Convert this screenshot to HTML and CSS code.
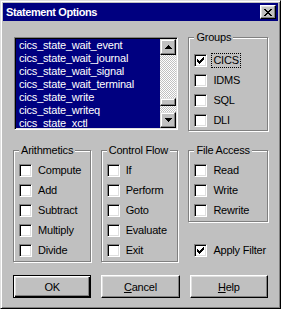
FILE: index.html
```html
<!DOCTYPE html>
<html>
<head>
    <meta charset="utf-8">
    <title>Statement Options</title>
    <link rel="stylesheet" href="styles.css">
</head>
<body>
    <div class="window">
        <div class="titlebar">
            <span class="title">Statement Options</span>
            <span class="close">
                <svg width="8" height="7" viewBox="0 0 8 7" shape-rendering="crispEdges"><path d="M0 0h2v1H0z M6 0h2v1H6z M1 1h2v1H1z M5 1h2v1H5z M2 2h4v1H2z M3 3h2v1H3z M2 4h4v1H2z M1 5h2v1H1z M5 5h2v1H5z M0 6h2v1H0z M6 6h2v1H6z"/></svg>
            </span>
        </div>
        <div class="content">
            <div class="grid">
                <div class="listbox">
                    <ul class="items">
                        <li>cics_state_wait_event</li>
                        <li>cics_state_wait_journal</li>
                        <li>cics_state_wait_signal</li>
                        <li>cics_state_wait_terminal</li>
                        <li>cics_state_write</li>
                        <li>cics_state_writeq</li>
                        <li>cics_state_xctl</li>
                    </ul>
                    <div class="scrollbar">
                        <div class="sbtn">
                            <svg width="7" height="4" viewBox="0 0 7 4" shape-rendering="crispEdges"><path d="M3 0h1v1H3z M2 1h3v1H2z M1 2h5v1H1z M0 3h7v1H0z"/></svg>
                        </div>
                        <div class="track"><div class="thumb"></div></div>
                        <div class="sbtn">
                            <svg width="7" height="4" viewBox="0 0 7 4" shape-rendering="crispEdges"><path d="M0 0h7v1H0z M1 1h5v1H1z M2 2h3v1H2z M3 3h1v1H3z"/></svg>
                        </div>
                    </div>
                </div>

                <fieldset class="group groups">
                    <legend>Groups</legend>
                    <label class="check"><span class="box"><svg width="7" height="7" viewBox="0 0 7 7" shape-rendering="crispEdges"><path d="M6 0h1v1H6z M5 1h2v1H5z M0 2h1v1H0z M4 2h3v1H4z M0 3h2v1H0z M3 3h3v1H3z M0 4h5v1H0z M1 5h3v1H1z M2 6h1v1H2z"/></svg></span><span class="text focus">CICS</span></label>
                    <label class="check"><span class="box"></span><span class="text">IDMS</span></label>
                    <label class="check"><span class="box"></span><span class="text">SQL</span></label>
                    <label class="check"><span class="box"></span><span class="text">DLI</span></label>
                </fieldset>

                <fieldset class="group">
                    <legend>Arithmetics</legend>
                    <label class="check"><span class="box"></span><span class="text">Compute</span></label>
                    <label class="check"><span class="box"></span><span class="text">Add</span></label>
                    <label class="check"><span class="box"></span><span class="text">Subtract</span></label>
                    <label class="check"><span class="box"></span><span class="text">Multiply</span></label>
                    <label class="check"><span class="box"></span><span class="text">Divide</span></label>
                </fieldset>

                <fieldset class="group">
                    <legend>Control Flow</legend>
                    <label class="check"><span class="box"></span><span class="text">If</span></label>
                    <label class="check"><span class="box"></span><span class="text">Perform</span></label>
                    <label class="check"><span class="box"></span><span class="text">Goto</span></label>
                    <label class="check"><span class="box"></span><span class="text">Evaluate</span></label>
                    <label class="check"><span class="box"></span><span class="text">Exit</span></label>
                </fieldset>

                <div class="column">
                    <fieldset class="group">
                        <legend>File Access</legend>
                        <label class="check"><span class="box"></span><span class="text">Read</span></label>
                        <label class="check"><span class="box"></span><span class="text">Write</span></label>
                        <label class="check"><span class="box"></span><span class="text">Rewrite</span></label>
                    </fieldset>
                    <label class="check apply"><span class="box"><svg width="7" height="7" viewBox="0 0 7 7" shape-rendering="crispEdges"><path d="M6 0h1v1H6z M5 1h2v1H5z M0 2h1v1H0z M4 2h3v1H4z M0 3h2v1H0z M3 3h3v1H3z M0 4h5v1H0z M1 5h3v1H1z M2 6h1v1H2z"/></svg></span><span class="text">Apply Filter</span></label>
                </div>
            </div>

            <div class="buttons">
                <div class="button default">OK</div>
                <div class="button"><u>C</u>ancel</div>
                <div class="button"><u>H</u>elp</div>
            </div>
        </div>
    </div>
</body>
</html>
```

FILE: styles.css
```css
*
{
    box-sizing: border-box;
}
body
{
    margin: 0px;
    font-family: "Liberation Sans", Arial, sans-serif;
    font-size: 11px;
    letter-spacing: -0.2px;
    background: #c0c0c0;
}
.window
{
    width: 281px;
    height: 309px;
    padding: 2px;
    display: flex;
    flex-direction: column;
    background: #c0c0c0;
    border: 1px solid;
    border-color: #dfdfdf #000 #000 #dfdfdf;
    box-shadow: inset 1px 1px #fff, inset -1px -1px #808080;
}

/* title bar */
.titlebar
{
    height: 18px;
    padding: 0 2px 0 3px;
    display: flex;
    align-items: center;
    background: #000080;
    color: #fff;
}
.title
{
    flex: 1;
    font-weight: bold;
    letter-spacing: -0.4px;
}
.close
{
    width: 16px;
    height: 14px;
    display: flex;
    align-items: center;
    justify-content: center;
    background: #c0c0c0;
    border: 1px solid;
    border-color: #fff #000 #000 #fff;
    box-shadow: inset -1px -1px #808080, inset 1px 1px #dfdfdf;
}

/* dialog body */
.content
{
    flex: 1;
    padding: 10px 10px 8px;
    display: flex;
    flex-direction: column;
}
.grid
{
    display: grid;
    grid-template-columns: repeat(3, 1fr);
    column-gap: 10px;
    row-gap: 13px;
}

/* list box */
.listbox
{
    grid-column: span 2;
    align-self: start;
    height: 93px;
    margin: 6px 0 0 1px;
    padding: 1px;
    display: flex;
    background: #000080;
    border: 1px solid;
    border-color: #808080 #fff #fff #808080;
    box-shadow: inset 1px 1px #000, inset -1px -1px #dfdfdf;
}
.items
{
    flex: 1;
    margin: 0;
    padding: 0 0 0 3px;
    list-style: none;
    overflow: hidden;
    color: #fff;
}
.items li
{
    line-height: 13px;
    white-space: nowrap;
}
.scrollbar
{
    width: 16px;
    display: flex;
    flex-direction: column;
    background: repeating-conic-gradient(#c0c0c0 0 25%, #fff 0 50%) 0 0 / 2px 2px;
}
.sbtn, .thumb
{
    background: #c0c0c0;
    border: 1px solid;
    border-color: #dfdfdf #000 #000 #dfdfdf;
    box-shadow: inset -1px -1px #808080, inset 1px 1px #fff;
}
.sbtn
{
    height: 16px;
    display: flex;
    align-items: center;
    justify-content: center;
}
.track
{
    flex: 1;
}
.thumb
{
    height: 8px;
    margin-top: 43px;
}

/* group boxes */
.group
{
    margin: 0;
    padding: 3px 4px 1px 5px;
    min-width: 0;
    border: 1px solid #808080;
    box-shadow: inset 1px 1px #fff, 1px 1px #fff;
}
.groups
{
    padding-top: 6px;
    padding-bottom: 0;
}
.group legend
{
    padding: 0 2px;
    line-height: 13px;
    white-space: nowrap;
    background: #c0c0c0;
}
.check
{
    height: 20px;
    display: flex;
    align-items: center;
    gap: 4px;
    white-space: nowrap;
}
.box
{
    flex: none;
    width: 13px;
    height: 13px;
    padding: 2px;
    display: flex;
    background: #fff;
    border: 1px solid;
    border-color: #808080 #fff #fff #808080;
    box-shadow: inset 1px 1px #000, inset -1px -1px #dfdfdf;
}
.text
{
    padding: 0 1px;
    line-height: 13px;
    border: 1px solid transparent;
}
.focus
{
    border: 1px dotted #000;
}
.column
{
    display: flex;
    flex-direction: column;
}
.apply
{
    margin: 18px 0 0 6px;
}

/* buttons */
.buttons
{
    display: grid;
    grid-template-columns: repeat(3, 1fr);
    column-gap: 10px;
    margin-top: 13px;
}
.button
{
    height: 23px;
    display: flex;
    align-items: center;
    justify-content: center;
    border: 1px solid;
    border-color: #fff #000 #000 #fff;
    box-shadow: inset -1px -1px #808080, inset 1px 1px #dfdfdf;
}
.button.default
{
    border-color: #000;
    box-shadow: inset 1px 1px #fff, inset -1px -1px #000, inset -2px -2px #808080, inset 2px 2px #dfdfdf;
}
```
